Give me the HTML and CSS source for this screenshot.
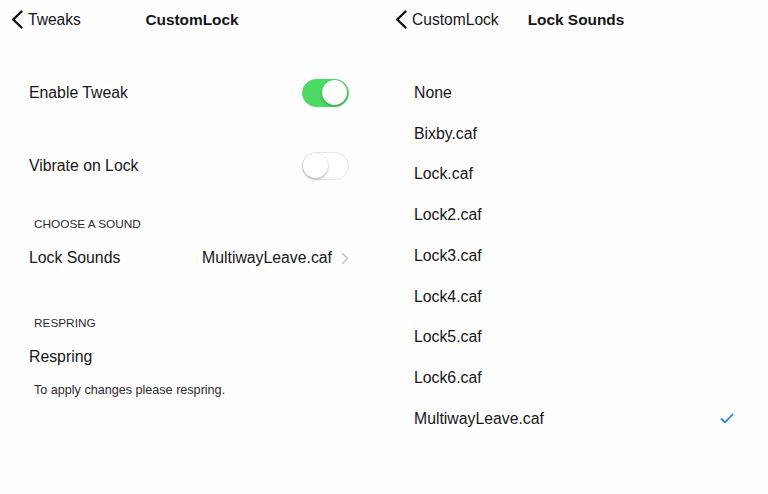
FILE: index.html
```html
<!DOCTYPE html>
<html>
<head>
   <meta charset="utf-8">
   <meta name="viewport" content="width=device-width, initial-scale=1">
   <title>CustomLock</title>
   <link rel="stylesheet" href="styles.css">
</head>
<body>
   <div class="screens">
      <!-- settings page -->
      <div class="panel">
         <div class="nav">
            <div class="back">
               <svg class="back-icon" width="12" height="19" viewBox="0 0 12 19"><polyline points="10.5,1.5 2.2,9.5 10.5,17.5" fill="none" stroke="#111" stroke-width="2.4" stroke-linecap="round" stroke-linejoin="round"/></svg>
               <span>Tweaks</span>
            </div>
            <div class="title">CustomLock</div>
            <div></div>
         </div>

         <div class="settings">
            <div class="row first">
               <span>Enable Tweak</span>
               <div class="switch on"><div class="knob"></div></div>
            </div>
            <div class="row second">
               <span>Vibrate on Lock</span>
               <div class="switch"><div class="knob"></div></div>
            </div>

            <div class="group-head">CHOOSE A SOUND</div>
            <div class="row">
               <span>Lock Sounds</span>
               <div class="value">
                  <span>MultiwayLeave.caf</span>
                  <svg width="8" height="13" viewBox="0 0 8 13"><polyline points="1.5,1.5 6.5,6.5 1.5,11.5" fill="none" stroke="#c4c4c8" stroke-width="1.6" stroke-linecap="round" stroke-linejoin="round"/></svg>
               </div>
            </div>

            <div class="group-head spaced">RESPRING</div>
            <div class="row">
               <span>Respring</span>
            </div>
            <div class="group-foot">To apply changes please respring.</div>
         </div>
      </div>

      <!-- sound list -->
      <div class="panel">
         <div class="nav">
            <div class="back">
               <svg class="back-icon" width="12" height="19" viewBox="0 0 12 19"><polyline points="10.5,1.5 2.2,9.5 10.5,17.5" fill="none" stroke="#111" stroke-width="2.4" stroke-linecap="round" stroke-linejoin="round"/></svg>
               <span>CustomLock</span>
            </div>
            <div class="title">Lock Sounds</div>
            <div></div>
         </div>

         <ul class="sounds">
            <li>None</li>
            <li>Bixby.caf</li>
            <li>Lock.caf</li>
            <li>Lock2.caf</li>
            <li>Lock3.caf</li>
            <li>Lock4.caf</li>
            <li>Lock5.caf</li>
            <li>Lock6.caf</li>
            <li class="picked">
               <span>MultiwayLeave.caf</span>
               <svg width="14" height="11" viewBox="0 0 14 11"><polyline points="1.5,6 5,9.3 12.5,1.5" fill="none" stroke="#2c7ee0" stroke-width="1.8" stroke-linecap="round" stroke-linejoin="round"/></svg>
            </li>
         </ul>
      </div>
   </div>
</body>
</html>
```

FILE: styles.css
```css
body{
   margin: 0;
   background: #fefefe;
   color: #161616;
   font-family: "Liberation Sans", Arial, sans-serif;
}

.screens{
   display: grid;
   grid-template-columns: 384px 384px;
   height: 494px;
}

.nav{
   height: 38px;
   padding-top: 1px;
   box-sizing: border-box;
   display: grid;
   grid-template-columns: 1fr auto 1fr;
   align-items: center;
}

.back{
   display: flex;
   align-items: center;
   gap: 5px;
   padding-left: 11px;
   font-size: 15.6px;
   white-space: nowrap;
}

.back-icon{
   margin-top: -1px;
}

.title{
   font-weight: 700;
   font-size: 15.4px;
}

.settings{
   padding-top: 33px;
}

.row{
   height: 44px;
   display: flex;
   align-items: center;
   justify-content: space-between;
   padding: 0 35px 0 29px;
   font-size: 15.8px;
}

.row.second{
   margin-top: 29px;
   margin-bottom: 24px;
}

.switch{
   width: 47px;
   height: 28px;
   box-sizing: border-box;
   border-radius: 14px;
   border: 1.5px solid #e6e6e6;
   background: #fff;
   position: relative;
}

.switch .knob{
   position: absolute;
   top: 0;
   left: 0;
   width: 25px;
   height: 25px;
   border-radius: 50%;
   background: #fff;
   box-shadow: 0 2px 3px rgba(0,0,0,0.22), 0 0 1px rgba(0,0,0,0.2);
}

.switch.on{
   background: #4cd964;
   border-color: #4cd964;
}

.switch.on .knob{
   left: 19px;
}

.value{
   display: flex;
   align-items: center;
   gap: 9px;
}

.group-head{
   height: 24px;
   line-height: 24px;
   padding-left: 34px;
   font-size: 11.8px;
   color: #2a2a2a;
}

.group-head.spaced{
   margin-top: 31px;
}

.group-foot{
   margin-top: 4px;
   padding-left: 34px;
   font-size: 12.6px;
   color: #2a2a2a;
}

.sounds{
   list-style: none;
   margin: 34.4px 0 0;
   padding: 0;
}

.sounds li{
   height: 40.75px;
   display: flex;
   align-items: center;
   justify-content: space-between;
   padding: 0 34px 0 30px;
   font-size: 15.8px;
}
```
